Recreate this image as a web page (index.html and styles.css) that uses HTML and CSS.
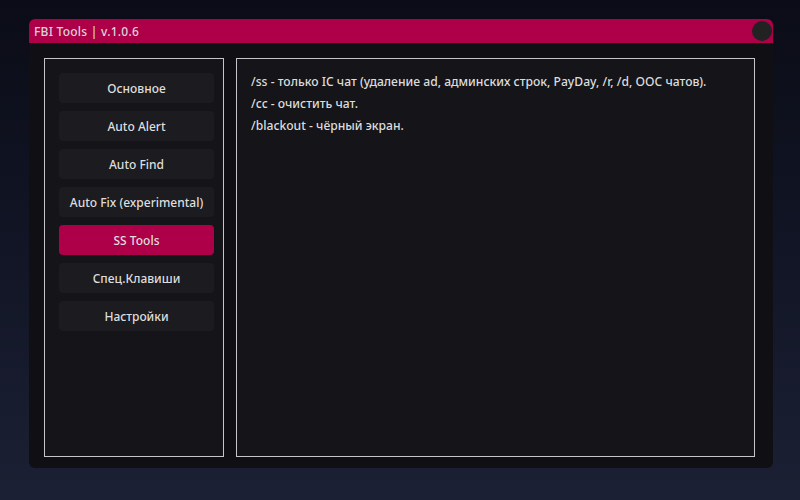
FILE: index.html
```html
<!DOCTYPE html>
<html>
<head>
<meta charset="utf-8">
<link rel="stylesheet" href="styles.css">
</head>
<body>
<div class="window">
  <div class="titlebar">
    <span class="title">FBI Tools | v.1.0.6</span>
    <span class="close"></span>
  </div>
  <div class="body">
    <div class="sidebar">
      <div class="btn">Основное</div>
      <div class="btn">Auto Alert</div>
      <div class="btn">Auto Find</div>
      <div class="btn">Auto Fix (experimental)</div>
      <div class="btn active">SS Tools</div>
      <div class="btn">Спец.Клавиши</div>
      <div class="btn">Настройки</div>
    </div>
    <div class="content">
      <p>/ss - только IC чат (удаление ad, админских строк, PayDay, /r, /d, OOC чатов).</p>
      <p>/cc - очистить чат.</p>
      <p>/blackout - чёрный экран.</p>
    </div>
  </div>
</div>
</body>
</html>
```
FILE: styles.css
```css
html, body {
  margin: 0;
  height: 100%;
}
body {
  background: linear-gradient(180deg, #0b0c17 0%, #111525 50%, #1b2034 100%);
  font-family: "Noto Sans", "DejaVu Sans", sans-serif;
  color: #dcdcdc;
  padding: 19px 27px 0 29px;
  box-sizing: border-box;
}
.window {
  width: 744px;
  height: 449px;
  background: #100f13;
  border-radius: 6px;
  display: flex;
  flex-direction: column;
  overflow: hidden;
}
.titlebar {
  height: 24px;
  background: #ae0048;
  display: flex;
  align-items: center;
  justify-content: space-between;
  padding: 0 1px 0 5px;
  flex: none;
}
.title {
  font-size: 12px;
  font-weight: 500;
  letter-spacing: 0.25px;
  color: #dcd6da;
}
.close {
  width: 20px;
  height: 20px;
  border-radius: 50%;
  background: #222222;
}
.body {
  flex: 1;
  display: flex;
  gap: 12px;
  padding: 15px 18px 11px 15px;
}
.sidebar {
  width: 180px;
  box-sizing: border-box;
  border: 1px solid #c6c6c8;
  background: #151418;
  padding: 14px 9px 0 14px;
  display: flex;
  flex-direction: column;
  gap: 8px;
}
.btn {
  height: 30px;
  border-radius: 4px;
  background: #1c1b20;
  display: flex;
  align-items: center;
  justify-content: center;
  font-size: 12px;
  font-weight: 500;
  color: #dedede;
}
.btn.active {
  background: #ae0048;
}
.content {
  flex: 1;
  box-sizing: border-box;
  border: 1px solid #c6c6c8;
  background: #151418;
  padding: 15px 14px;
}
.content p {
  margin: 0 0 6px;
  font-size: 12.15px;
  line-height: 16px;
  font-weight: 500;
  color: #dcdcdc;
}
```
